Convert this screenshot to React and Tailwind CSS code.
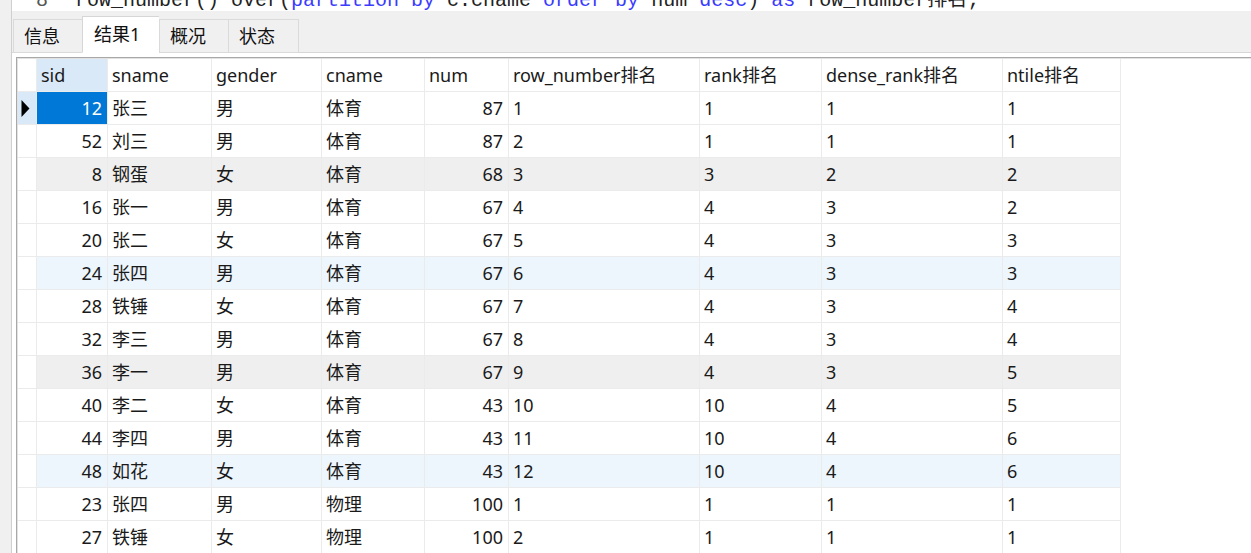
import React from "react";

const rows = [
  ["12", "张三", "男", "体育", "87", "1", "1", "1", "1"],
  ["52", "刘三", "男", "体育", "87", "2", "1", "1", "1"],
  ["8", "钢蛋", "女", "体育", "68", "3", "3", "2", "2"],
  ["16", "张一", "男", "体育", "67", "4", "4", "3", "2"],
  ["20", "张二", "女", "体育", "67", "5", "4", "3", "3"],
  ["24", "张四", "男", "体育", "67", "6", "4", "3", "3"],
  ["28", "铁锤", "女", "体育", "67", "7", "4", "3", "4"],
  ["32", "李三", "男", "体育", "67", "8", "4", "3", "4"],
  ["36", "李一", "男", "体育", "67", "9", "4", "3", "5"],
  ["40", "李二", "女", "体育", "43", "10", "10", "4", "5"],
  ["44", "李四", "男", "体育", "43", "11", "10", "4", "6"],
  ["48", "如花", "女", "体育", "43", "12", "10", "4", "6"],
  ["23", "张四", "男", "物理", "100", "1", "1", "1", "1"],
  ["27", "铁锤", "女", "物理", "100", "2", "1", "1", "1"],
];

const headers = ["sid", "sname", "gender", "cname", "num", "row_number排名", "rank排名", "dense_rank排名", "ntile排名"];
const numeric = [true, false, false, false, true, false, false, false, false];

function rowBg(i) {
  if (i === 2 || i === 8) return "bg-[#efefef]";
  if (i === 5 || i === 11) return "bg-[#edf5fd]";
  return "bg-white";
}

const cell = "h-[33px] border-r border-b border-[#ebebeb] flex items-center whitespace-nowrap overflow-hidden";

function Tab({ label, active, last }) {
  if (active) {
    return (
      <div className="h-[37px] w-[77px] -mb-px bg-white border-l border-t border-[#d6d6d6] border-b border-b-white flex items-center pl-[11px] text-[#111]">
        {label}
      </div>
    );
  }
  return (
    <div
      className={
        "h-[34px] -mb-px bg-[#f0f0f0] border-l border-t border-b border-[#dadada] flex items-center pl-[10px] text-[#111] " +
        (last ? "border-r w-[71px]" : "w-[69px]")
      }
    >
      {label}
    </div>
  );
}

export default function App() {
  return (
    <div
      className="w-[1251px] h-[553px] overflow-hidden bg-white flex text-[18px] text-[#1a1a1a]"
      style={{ fontFamily: '"Noto Sans", "Noto Sans CJK SC", sans-serif' }}
    >
      {/* left frame strip */}
      <div className="w-[12px] shrink-0 bg-[#f0f0f0] border-r border-[#d0d0d0]" />

      <div className="flex-1 min-w-0 flex flex-col">
        {/* code editor line, mostly scrolled off */}
        <div className="h-[11px] shrink-0 overflow-hidden flex" style={{ fontFamily: '"Liberation Mono", "Noto Sans CJK SC", monospace' }}>
          <div className="w-[36px] shrink-0 text-right text-[20px] leading-[20px] -mt-[9px] text-[#555]">8</div>
          <div className="w-[27px] shrink-0" />
          <div className="text-[20px] leading-[20px] -mt-[9px] whitespace-pre text-[#222]">
            row_number() over(<span className="text-[#3b3bff]">partition by</span> c.cname <span className="text-[#3b3bff]">order by</span> num <span className="text-[#3b3bff]">desc</span>) <span className="text-[#3b3bff]">as</span> row_number排名;
          </div>
        </div>

        {/* result tabs */}
        <div className="h-[42px] shrink-0 bg-[#f0f0f0] border-b border-[#d6d6d6] flex items-end pl-px">
          <Tab label="信息" />
          <Tab label="结果1" active />
          <Tab label="概况" />
          <Tab label="状态" last />
        </div>

        {/* grid area */}
        <div className="flex-1 min-h-0 pt-[4px] pl-[4px]">
          <div className="h-full border-t border-l border-[#a8a8a8]">
            <div className="h-full border-t border-l border-[#e2e2e2]">
              <div className="grid grid-cols-[19px_71px_104px_110px_103px_84px_191px_122px_181px_118px] w-max">
                {/* header */}
                <div className={cell + " bg-white"} />
                {headers.map((h, i) => (
                  <div key={h} className={cell + " pl-[4px] " + (i === 0 ? "bg-[#d9e9f8]" : "bg-white")}>
                    {h}
                  </div>
                ))}

                {rows.map((r, ri) => (
                  <React.Fragment key={ri}>
                    <div className={cell + " pl-[3px] " + (ri === 0 ? "bg-[#d9e9f8]" : "bg-white")}>
                      {ri === 0 && (
                        <svg width="9" height="17" viewBox="0 0 9 17">
                          <polygon points="0.5,0 8.5,8.5 0.5,17" fill="#000" />
                        </svg>
                      )}
                    </div>
                    {r.map((v, ci) => {
                      const selected = ri === 0 && ci === 0;
                      return (
                        <div
                          key={ci}
                          className={
                            cell +
                            (numeric[ci] ? " justify-end pr-[5px]" : " pl-[4px]") +
                            (selected ? " bg-[#0078d7] text-white" : " " + rowBg(ri))
                          }
                        >
                          {v}
                        </div>
                      );
                    })}
                  </React.Fragment>
                ))}
              </div>
            </div>
          </div>
        </div>
      </div>
    </div>
  );
}
